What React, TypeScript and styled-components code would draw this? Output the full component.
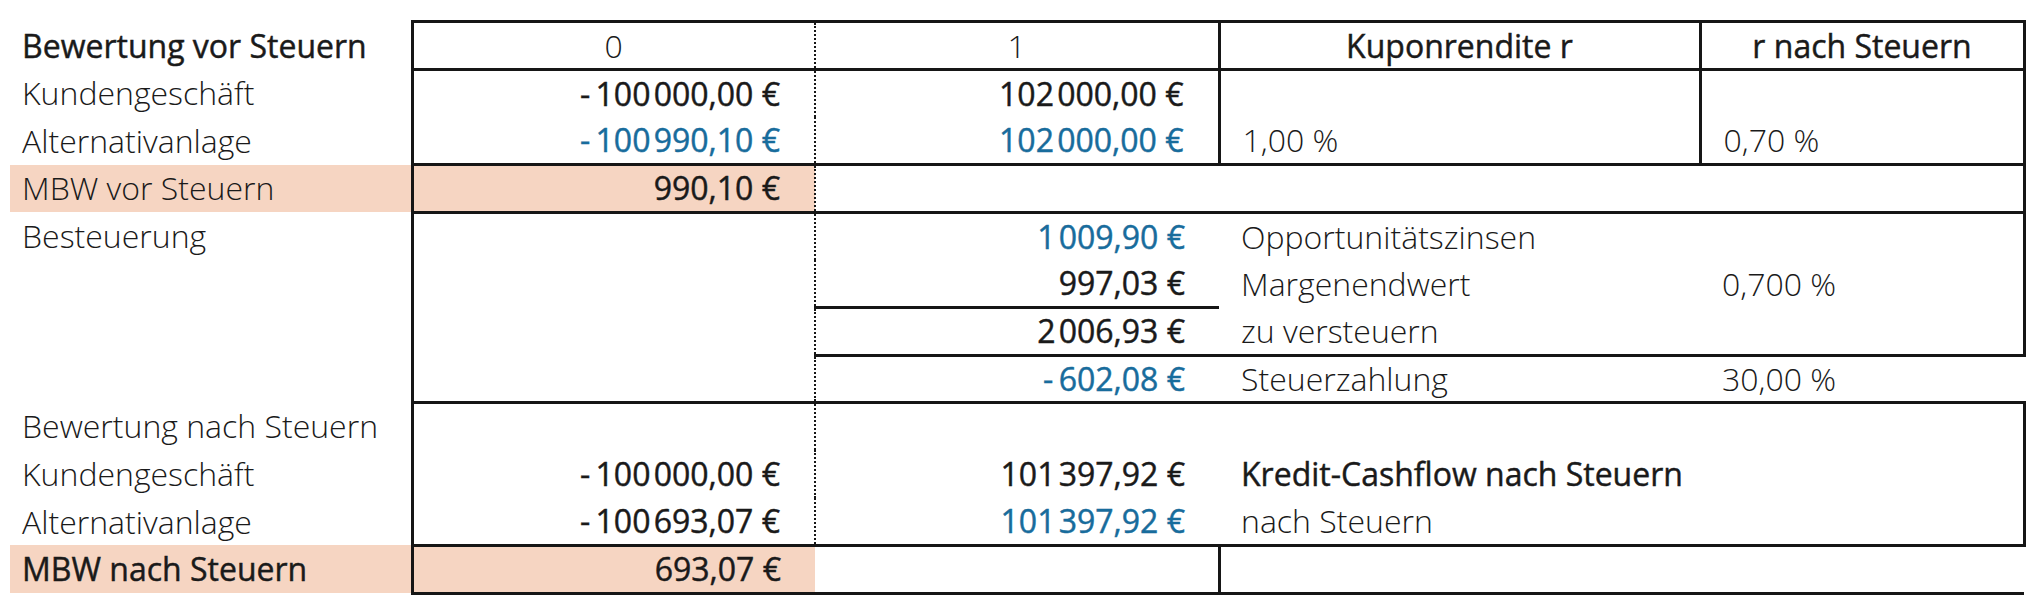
import React from "react";
import styled, { createGlobalStyle, css } from "styled-components";

const GlobalStyle = createGlobalStyle`
  html, body {
    margin: 0;
    padding: 0;
    background: #ffffff;
  }
  body {
    font-family: "Open Sans", "Noto Sans", "Liberation Sans", sans-serif;
    color: #1a1a1a;
  }
`;

type Edge = "solid" | "dotted";

const LINE = "#161616";
const BLUE = "#186c9c";
const PEACH = "#f6d5c2";

const edge = (e?: Edge) =>
  e === "solid" ? `3px solid ${LINE}` : e === "dotted" ? `2px dotted ${LINE}` : "none";

// the sheet uses a roman and a light cut; roman sits a little heavier than regular
const roman = css`
  font-weight: 400;
  -webkit-text-stroke: 0.45px currentColor;
`;
const light = css`
  font-weight: 300;
`;

const Sheet = styled.table`
  margin: 20px 0 0 10px;
  border-collapse: collapse;
  table-layout: fixed;
  width: 2014px;
  font-size: 32px;
  line-height: 1;
`;

const Row = styled.tr<{ $head?: boolean }>`
  height: ${(p) => (p.$head ? 48 : 47.6)}px;
`;

const Label = styled.td<{ $strong?: boolean; $peach?: boolean }>`
  padding: 0 0 0 12px;
  white-space: nowrap;
  ${(p) => (p.$strong ? roman : light)}
  background: ${(p) => (p.$peach ? PEACH : "transparent")};
`;

const Cell = styled.td<{
  $t?: Edge;
  $r?: Edge;
  $b?: Edge;
  $l?: Edge;
  $align?: "left" | "right" | "center";
  $light?: boolean;
  $blue?: boolean;
  $peach?: boolean;
}>`
  border-top: ${(p) => edge(p.$t)};
  border-right: ${(p) => edge(p.$r)};
  border-bottom: ${(p) => edge(p.$b)};
  border-left: ${(p) => edge(p.$l)};
  text-align: ${(p) => p.$align || "right"};
  padding: ${(p) =>
    p.$align === "left" ? "0 0 0 22px" : p.$align === "center" ? "0" : "0 34px 0 0"};
  white-space: nowrap;
  ${(p) => (p.$light ? light : roman)}
  color: ${(p) => (p.$blue ? BLUE : "inherit")};
  background: ${(p) => (p.$peach ? PEACH : "transparent")};
`;

// gaps used by the sheet's number format: after the sign and between thousands
const s = "\u2009";
const g = "\u200A";
const eur = (v: string) => `${v} €`;

export default function App() {
  return (
    <>
      <GlobalStyle />
      <Sheet>
        <colgroup>
          <col style={{ width: 402 }} />
          <col style={{ width: 403 }} />
          <col style={{ width: 404 }} />
          <col style={{ width: 481 }} />
          <col style={{ width: 324 }} />
        </colgroup>
        <tbody>
          <Row $head>
            <Label $strong>Bewertung vor Steuern</Label>
            <Cell $t="solid" $l="solid" $b="solid" $r="dotted" $align="center" $light>
              0
            </Cell>
            <Cell $t="solid" $b="solid" $r="solid" $align="center" $light>
              1
            </Cell>
            <Cell $t="solid" $b="solid" $r="solid" $align="center">
              Kuponrendite r
            </Cell>
            <Cell $t="solid" $b="solid" $r="solid" $align="center">
              r nach Steuern
            </Cell>
          </Row>
          <Row>
            <Label>Kundengeschäft</Label>
            <Cell $l="solid" $r="dotted">{eur(`-${s}100${g}000,00`)}</Cell>
            <Cell $r="solid">{eur(`102${g}000,00`)}</Cell>
            <Cell $r="solid" $align="left" />
            <Cell $r="solid" $align="left" />
          </Row>
          <Row>
            <Label>Alternativanlage</Label>
            <Cell $l="solid" $r="dotted" $b="solid" $blue>
              {eur(`-${s}100${g}990,10`)}
            </Cell>
            <Cell $r="solid" $b="solid" $blue>
              {eur(`102${g}000,00`)}
            </Cell>
            <Cell $r="solid" $b="solid" $align="left" $light>
              1,00 %
            </Cell>
            <Cell $r="solid" $b="solid" $align="left" $light>
              0,70 %
            </Cell>
          </Row>
          <Row>
            <Label $peach>MBW vor Steuern</Label>
            <Cell $l="solid" $r="dotted" $b="solid" $peach>
              {eur("990,10")}
            </Cell>
            <Cell colSpan={3} $r="solid" $b="solid" />
          </Row>
          <Row>
            <Label>Besteuerung</Label>
            <Cell $l="solid" $r="dotted" />
            <Cell $blue>{eur(`1${g}009,90`)}</Cell>
            <Cell $align="left" $light>
              Opportunitätszinsen
            </Cell>
            <Cell $r="solid" $align="left" />
          </Row>
          <Row>
            <Label />
            <Cell $l="solid" $r="dotted" />
            <Cell $b="solid">{eur("997,03")}</Cell>
            <Cell $align="left" $light>
              Margenendwert
            </Cell>
            <Cell $r="solid" $align="left" $light>
              0,700 %
            </Cell>
          </Row>
          <Row>
            <Label />
            <Cell $l="solid" $r="dotted" />
            <Cell $b="solid">{eur(`2${g}006,93`)}</Cell>
            <Cell $b="solid" $align="left" $light>
              zu versteuern
            </Cell>
            <Cell $b="solid" $r="solid" $align="left" />
          </Row>
          <Row>
            <Label />
            <Cell $l="solid" $r="dotted" $b="solid" />
            <Cell $b="solid" $blue>
              {eur(`-${s}602,08`)}
            </Cell>
            <Cell $b="solid" $align="left" $light>
              Steuerzahlung
            </Cell>
            <Cell $b="solid" $align="left" $light>
              30,00 %
            </Cell>
          </Row>
          <Row>
            <Label>Bewertung nach Steuern</Label>
            <Cell $l="solid" $r="dotted" />
            <Cell />
            <Cell $align="left" />
            <Cell $r="solid" $align="left" />
          </Row>
          <Row>
            <Label>Kundengeschäft</Label>
            <Cell $l="solid" $r="dotted">{eur(`-${s}100${g}000,00`)}</Cell>
            <Cell>{eur(`101${g}397,92`)}</Cell>
            <Cell $align="left">Kredit-Cashflow nach Steuern</Cell>
            <Cell $r="solid" $align="left" />
          </Row>
          <Row>
            <Label>Alternativanlage</Label>
            <Cell $l="solid" $r="dotted" $b="solid">
              {eur(`-${s}100${g}693,07`)}
            </Cell>
            <Cell $b="solid" $blue>
              {eur(`101${g}397,92`)}
            </Cell>
            <Cell $b="solid" $align="left" $light>
              nach Steuern
            </Cell>
            <Cell $b="solid" $r="solid" $align="left" />
          </Row>
          <Row>
            <Label $strong $peach>
              MBW nach Steuern
            </Label>
            <Cell $l="solid" $b="solid" $peach>
              {eur("693,07")}
            </Cell>
            <Cell $r="solid" $b="solid" />
            <Cell colSpan={2} $b="solid" />
          </Row>
        </tbody>
      </Sheet>
    </>
  );
}
